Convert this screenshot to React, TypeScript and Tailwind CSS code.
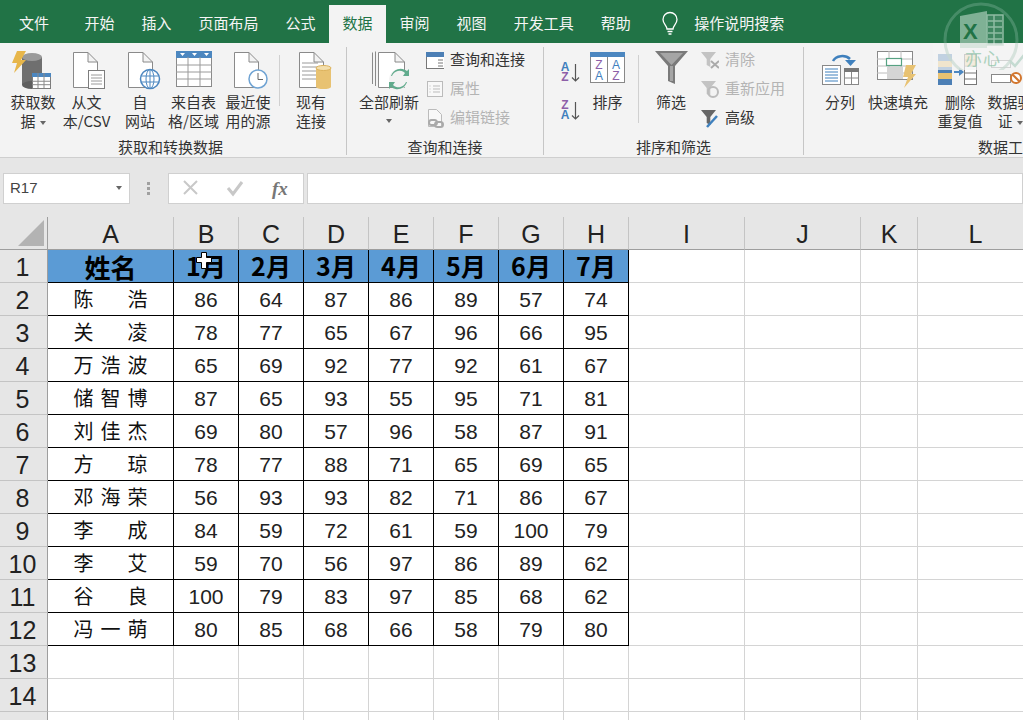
import React from "react";

const CJK = "font-['Noto_Sans_CJK_SC','Liberation_Sans',sans-serif]";
const Doc = ({ x = 0, y = 0, w = 30, h = 38, fold = 10, c = "#8a8a8a" }: any) => (
  <path d={`M${x + .5} ${y + .5}H${x + w - fold}L${x + w - .5} ${y + fold}V${y + h - .5}H${x + .5}ZM${x + w - fold} ${y + .5}V${y + fold}H${x + w - .5}`} fill="#fff" stroke={c} />
);
const MiniTable = ({ x, y, w, h }: any) => (
  <g>
    <rect x={x + .5} y={y + .5} width={w} height={h} fill="#fff" stroke="#7d7d7d" />
    <rect x={x} y={y} width={w + 1} height={4} fill="#4c87c0" />
    <path d={`M${x} ${y + h * .55}H${x + w}M${x} ${y + h * .78}H${x + w}M${x + w / 3} ${y}V${y + h}M${x + 2 * w / 3} ${y}V${y + h}`} stroke="#8a8a8a" />
  </g>
);

const IconGet = () => (
  <svg width="52" height="42" viewBox="0 0 52 42">
    <path d="M15 6h20v28H15z" fill="#6f6f6f" />
    <ellipse cx="25" cy="6" rx="10" ry="4" fill="#9a9a9a" />
    <ellipse cx="25" cy="34" rx="10" ry="4" fill="#5f5f5f" />
    <path d="M10 0h9l-5 9h5L7 22l3-10H5z" fill="#e7b64a" />
    <MiniTable x={25} y={22} w={18} h={15} />
  </svg>
);
const IconText = () => (
  <svg width="52" height="42" viewBox="0 0 52 42">
    <Doc x={12} y={1} w={25} h={36} />
    <rect x="27.500" y="19.500" width="16" height="18" fill="#fff" stroke="#7d7d7d" />
    <path d="M30 24h11M30 27h11M30 30h11M30 33h11" stroke="#9a9a9a" />
  </svg>
);
const IconWeb = () => (
  <svg width="52" height="42" viewBox="0 0 52 42">
    <Doc x={14} y={1} w={25} h={36} />
    <circle cx="36" cy="28" r="9.500" fill="#fff" stroke="#4c87c0" strokeWidth="1.500" />
    <ellipse cx="36" cy="28" rx="4" ry="9.500" fill="none" stroke="#4c87c0" />
    <path d="M27 25h18M27 31h18M36 18v20" stroke="#4c87c0" />
  </svg>
);
const IconFromTable = () => (
  <svg width="52" height="42" viewBox="0 0 52 42">
    <rect x="8.500" y="5.500" width="35" height="30" fill="#fff" stroke="#8a8a8a" />
    <rect x="8" y="0" width="36" height="7" fill="#4c87c0" />
    <path d="M8 14h36M8 21h36M8 28h36M20 6v30M32 6v30" stroke="#9a9a9a" />
    <path d="M12 2h5l-2.500 3zM24 2h5l-2.500 3zM36 2h5l-2.500 3z" fill="#fff" />
  </svg>
);
const IconRecent = () => (
  <svg width="52" height="42" viewBox="0 0 52 42">
    <Doc x={12} y={1} w={25} h={36} />
    <circle cx="36" cy="28" r="9" fill="#fff" stroke="#6fa3d3" strokeWidth="1.500" />
    <path d="M36 22v6.500h5" fill="none" stroke="#666" />
  </svg>
);
const IconExisting = () => (
  <svg width="52" height="42" viewBox="0 0 52 42">
    <Doc x={14} y={1} w={25} h={36} />
    <path d="M17 12h16M17 16h16M17 20h14M17 24h14M17 28h14" stroke="#9a9a9a" />
    <path d="M31 17h15v19H31z" fill="#e8c272" />
    <ellipse cx="38.500" cy="36" rx="7.500" ry="2" fill="#e8c272" />
    <ellipse cx="38.500" cy="17" rx="7.500" ry="2.500" fill="#f3dfae" stroke="#dcb25c" />
  </svg>
);
const IconRefresh = () => (
  <svg width="60" height="44" viewBox="0 0 60 44">
    <path d="M13.500 1.500V33M16.500 0.500V35" stroke="#8a8a8a" fill="none" />
    <Doc x={19} y={1} w={27} h={36} />
    <circle cx="40" cy="28" r="10" fill="#f3f3f3" />
    <path d="M33 25a8 8 0 0 1 13-3l-2 3h6v-7l-2 2a10 10 0 0 0-16 5zM47 31a8 8 0 0 1-13 3l2-3h-6v7l2-2a10 10 0 0 0 16-5z" fill="#61ab8d" />
  </svg>
);
const IconSort = () => (
  <svg width="52" height="42" viewBox="0 0 52 42">
    <rect x="8.500" y="1.500" width="34" height="30" fill="#fff" stroke="#888" />
    <rect x="8" y="1" width="35" height="5" fill="#4c87c0" />
    <path d="M25.500 6v26" stroke="#888" />
    <text x="17" y="18" textAnchor="middle" fontSize="12" fill="#8d5fa8" fontFamily="Liberation Sans">Z</text>
    <text x="17" y="29" textAnchor="middle" fontSize="12" fill="#3f80bd" fontFamily="Liberation Sans">A</text>
    <text x="34" y="18" textAnchor="middle" fontSize="12" fill="#3f80bd" fontFamily="Liberation Sans">A</text>
    <text x="34" y="29" textAnchor="middle" fontSize="12" fill="#8d5fa8" fontFamily="Liberation Sans">Z</text>
  </svg>
);
const AZ = ({ down }: { down?: boolean }) => (
  <svg width="24" height="22" viewBox="0 0 24 22">
    <text x="7" y="10" textAnchor="middle" fontSize="12" fontWeight="700" fill={down ? "#8d5fa8" : "#3f80bd"} fontFamily="Liberation Sans">{down ? "Z" : "A"}</text>
    <text x="7" y="20" textAnchor="middle" fontSize="12" fontWeight="700" fill={down ? "#3f80bd" : "#8d5fa8"} fontFamily="Liberation Sans">{down ? "A" : "Z"}</text>
    <path d="M17.500 3v17M14 16.500L17.500 20l3.500-3.500" fill="none" stroke="#555" strokeWidth="1.200" />
  </svg>
);
const IconFilter = () => (
  <svg width="52" height="42" viewBox="0 0 52 42">
    <path d="M10 0h33L30 15v18l-7-3V15z" fill="#7a7a7a" />
    <path d="M15 2h23L26.500 14z" fill="#a5a5a5" />
    <path d="M25 15h3v15h-3z" fill="#a5a5a5" />
  </svg>
);
const Funnel = ({ c = "#c3c3c3", size = 15 }: any) => <path d={`M0 1h${size}L${size * .62} 8v8L${size * .38} 14V8z`} fill={c} />;
const IconSplit = () => (
  <svg width="52" height="42" viewBox="0 0 52 42">
    <rect x="8.500" y="14.500" width="18" height="19" fill="#fff" stroke="#888" />
    <path d="M11 18h13M11 21h13M11 24h13M11 27h13M11 30h13" stroke="#3f80bd" />
    <rect x="30.500" y="17.500" width="14" height="16" fill="#fff" stroke="#888" />
    <rect x="30" y="17" width="15" height="4" fill="#777" />
    <path d="M37.500 21v13M30 27h15" stroke="#888" />
    <path d="M19 10a10 8 0 0 1 17-2" fill="none" stroke="#3f80bd" strokeWidth="2.500" />
    <path d="M31 9h11l-5.500 6z" fill="#3f80bd" />
  </svg>
);
const IconFlash = () => (
  <svg width="52" height="42" viewBox="0 0 52 42">
    <rect x="5.500" y="0.500" width="35" height="28" fill="#fff" stroke="#888" />
    <path d="M5 8h35M5 15h35M5 22h35M17 0v28M29 0v28" stroke="#bcbcbc" />
    <rect x="14.500" y="7.500" width="15" height="7" fill="#fff" stroke="#57a283" strokeWidth="1.200" />
    <rect x="15" y="16" width="16" height="12" fill="#d5d5d5" />
    <path d="M34 14h10l-5 9h5L32 37l4-11h-5z" fill="#e8c272" />
  </svg>
);
const IconDup = () => (
  <svg width="52" height="42" viewBox="0 0 52 42">
    <g transform="translate(-3 2)">
      <rect x="7" y="1" width="14" height="31" fill="#4c7fb5" />
      <path d="M7 8h14v6H7zM7 20h14v6H7z" fill="#e8c272" />
      <path d="M23 19h6" stroke="#4c87c0" strokeWidth="2" />
      <path d="M28 15l5 4-5 4z" fill="#4c87c0" />
      <rect x="33.500" y="1.500" width="12" height="30" fill="#fff" stroke="#777" />
      <path d="M33 7h13M33 13h13M33 20h13M33 26h13" stroke="#777" />
      <path d="M34 2h11v11H34z" fill="#e8c272" opacity=".6" />
    </g>
  </svg>
);
const IconValidate = () => (
  <svg width="52" height="42" viewBox="0 0 52 42">
    <rect x="7.500" y="9.500" width="19" height="7" fill="#fff" stroke="#888" />
    <rect x="7.500" y="23.500" width="19" height="8" fill="#fff" stroke="#888" />
    <path d="M26 10l5 5 9-11" fill="none" stroke="#57a283" strokeWidth="2.500" />
    <circle cx="32" cy="27" r="5" fill="#fff" stroke="#d2762e" strokeWidth="2" />
    <path d="M28.500 23.500l7 7" stroke="#d2762e" strokeWidth="2" />
  </svg>
);

const Caret = () => <span className="inline-block w-0 h-0 border-x-[3.5px] border-x-transparent border-t-[4px] border-t-[#666] align-middle" />;

function Big({ w, icon, l1, l2, caret }: any) {
  return (
    <div className="flex flex-col items-center shrink-0 text-[15px] leading-[19px] text-[#333]" style={{ width: w }}>
      <div className="h-[45px] pt-[4px] flex items-start justify-center">{icon}</div>
      <div className="whitespace-nowrap">{l1}</div>
      {l2 && <div className="whitespace-nowrap">{l2}{caret && <span className="ml-1"><Caret /></span>}</div>}
    </div>
  );
}
function Small({ icon, label, off }: any) {
  return (
    <div className={`h-[29px] flex items-center gap-[6px] text-[15px] whitespace-nowrap ${off ? "text-[#b4b4b4]" : "text-[#333]"}`}>
      <span className="w-[18px] h-[20px] flex items-center justify-center">{icon}</span>
      {label}
    </div>
  );
}

function Group({ w, label, children, labelClass = "text-center" }: any) {
  return (
    <div className="shrink-0 h-full border-r border-[#c6c6c6] flex flex-col" style={{ width: w }}>
      <div className="h-[90px] shrink-0 flex items-start">{children}</div>
      <div className={`text-[15px] leading-[20px] text-[#333] whitespace-nowrap ${labelClass}`}>{label}</div>
    </div>
  );
}

const tabs = ["开始", "插入", "页面布局", "公式", "数据", "审阅", "视图", "开发工具", "帮助"];

function Ribbon() {
  return (
    <>
      <div className="h-[43px] bg-[#217346] flex items-end text-[15px] text-[#f5f5f5] shrink-0">
        <div className="h-[38px] leading-[36px] ml-[6px] mr-[9px] px-[13px]">文件</div>
        {tabs.map((t) => (
          <div key={t} className={`h-[38px] leading-[36px] px-[13.500px] ${t === "数据" ? "bg-[#f3f3f3] text-[#217346]" : ""}`}>{t}</div>
        ))}
        <div className="h-[38px] flex items-center ml-[17px] gap-[15px]">
          <svg width="18" height="24" viewBox="0 0 18 24" className="mb-[2px]">
            <path d="M6 18c0-3-4-5-4-9.500a7 7 0 0 1 14 0C16 13 12 15 12 18zM6.500 20.500h5M7.500 23h3" fill="none" stroke="#fff" strokeWidth="1.300" />
          </svg>
          <span className="mb-[2px]">操作说明搜索</span>
        </div>
      </div>
      <div className="h-[114px] bg-[#f3f3f3] flex pt-[4px] pb-[2px] overflow-hidden shrink-0">
        <Group w={347} label="获取和转换数据" labelClass="text-center pr-[5px]">
          <div className="w-[5px] shrink-0" />
          <Big w={56} icon={<IconGet />} l1="获取数" l2="据" caret />
          <Big w={51} icon={<IconText />} l1="从文" l2="本/CSV" />
          <Big w={56} icon={<IconWeb />} l1="自" l2="网站" />
          <Big w={51} icon={<IconFromTable />} l1="来自表" l2="格/区域" />
          <Big w={58} icon={<IconRecent />} l1="最近使" l2="用的源" />
          <div className="w-[2px] shrink-0" />
          <div className="w-px h-[51px] bg-[#d0d0d0] shrink-0 mt-[8px]" />
          <div className="w-[3px] shrink-0" />
          <Big w={56} icon={<IconExisting />} l1="现有" l2="连接" />
        </Group>
        <Group w={197} label="查询和连接">
          <div className="w-[11px] shrink-0" />
          <div className="flex flex-col items-center w-[62px] shrink-0 text-[15px] leading-[19px] text-[#333]">
            <div className="h-[45px] pt-[4px]"><IconRefresh /></div>
            <div className="whitespace-nowrap">全部刷新</div>
            <div className="h-[19px] flex items-center"><Caret /></div>
          </div>
          <div className="w-[6px] shrink-0" />
          <div className="flex flex-col -mt-[2px]">
            <Small label="查询和连接" icon={<svg width="20" height="20"><rect x=".5" y="2.500" width="18" height="16" fill="#fff" stroke="#777" /><rect width="19" height="5" y="2" fill="#4c7fb5" /><path d="M12 10h5M12 13h5M12 16h5" stroke="#777" /></svg>} />
            <Small off label="属性" icon={<svg width="18" height="18"><rect x="1.500" y="1.500" width="15" height="15" fill="#f8f8f8" stroke="#bbb" /><path d="M7 6h7M7 9h7M7 12h7M3.500 6h1M3.500 9h1M3.500 12h1" stroke="#bbb" /></svg>} />
            <Small off label="编辑链接" icon={<svg width="18" height="20"><path d="M2.500 1.500h8l5 5v12h-13z" fill="#f8f8f8" stroke="#bbb" /><rect x="3" y="12" width="8" height="5" rx="2.500" fill="none" stroke="#aaa" strokeWidth="2" /><rect x="9" y="14" width="8" height="5" rx="2.500" fill="none" stroke="#aaa" strokeWidth="2" /></svg>} />
          </div>
        </Group>
        <Group w={260} label="排序和筛选">
          <div className="w-[14px] shrink-0" />
          <div className="flex flex-col w-[24px] shrink-0 pt-[14px] gap-[16px]"><AZ /><AZ down /></div>
          <Big w={51} icon={<IconSort />} l1="排序" />
          <div className="w-[5px] shrink-0" />
          <div className="w-px h-[68px] bg-[#d0d0d0] shrink-0 mt-[8px]" />
          <div className="w-[6px] shrink-0" />
          <Big w={52} icon={<IconFilter />} l1="筛选" />
          <div className="w-[4px] shrink-0" />
          <div className="flex flex-col -mt-[2px]">
            <Small off label="清除" icon={<svg width="20" height="20"><g transform="translate(0 1)"><Funnel /></g><path d="M10 11l8 7M18 11l-8 7" stroke="#aaa" strokeWidth="2" /></svg>} />
            <Small off label="重新应用" icon={<svg width="20" height="20"><g transform="translate(0 1)"><Funnel /></g><circle cx="12" cy="13" r="5" fill="none" stroke="#bbb" strokeWidth="2" /></svg>} />
            <Small label="高级" icon={<svg width="20" height="20"><g transform="translate(0 1)"><Funnel c="#666" /></g><path d="M6 19l10-11" stroke="#3f80bd" strokeWidth="2.500" /></svg>} />
          </div>
        </Group>
        <Group w={260} label="数据工具" labelClass="text-left pl-[174px]">
          <div className="w-[10px] shrink-0" />
          <Big w={52} icon={<IconSplit />} l1="分列" />
          <div className="w-[2px] shrink-0" />
          <Big w={60} icon={<IconFlash />} l1="快速填充" />
          <Big w={64} icon={<IconDup />} l1="删除" l2="重复值" />
          <Big w={36} icon={<IconValidate />} l1="数据验" l2="证" caret />
        </Group>
      </div>
      <div className="h-[1px] bg-[#cfcfcf] shrink-0" />
    </>
  );
}

function FormulaBar() {
  return (
    <div className="h-[59px] bg-[#e6e6e6] shrink-0 flex items-center pl-[3px] pt-[1px] gap-0">
      <div className="w-[127px] h-[31px] bg-white border border-[#d0d0d0] flex items-center justify-between pl-[6px] pr-[7px] text-[15px] text-[#444] font-['Liberation_Sans',sans-serif]">
        R17<Caret />
      </div>
      <div className="w-[38px] flex flex-col items-center gap-[2px] shrink-0 pr-[2px]">
        <i className="w-[3px] h-[3px] bg-[#a0a0a0]" /><i className="w-[3px] h-[3px] bg-[#a0a0a0]" /><i className="w-[3px] h-[3px] bg-[#a0a0a0]" />
      </div>
      <div className="w-[136px] h-[31px] bg-white border border-[#d0d0d0] flex items-center shrink-0">
        <svg width="134" height="29" viewBox="0 0 134 29">
          <path d="M15 7l13 13M28 7L15 20" stroke="#c8c8c8" strokeWidth="2" />
          <path d="M59 14l5 6 9-12" fill="none" stroke="#c8c8c8" strokeWidth="3" />
          <text x="103" y="21" fontFamily="Liberation Serif" fontStyle="italic" fontWeight="700" fontSize="19" fill="#777">fx</text>
        </svg>
      </div>
      <div className="ml-[3px] flex-1 h-[31px] bg-white border border-[#d0d0d0]" />
    </div>
  );
}

const rows: [string, number[]][] = [
  ["陈||浩", [86, 64, 87, 86, 89, 57, 74]],
  ["关||凌", [78, 77, 65, 67, 96, 66, 95]],
  ["万|浩|波", [65, 69, 92, 77, 92, 61, 67]],
  ["储|智|博", [87, 65, 93, 55, 95, 71, 81]],
  ["刘|佳|杰", [69, 80, 57, 96, 58, 87, 91]],
  ["方||琼", [78, 77, 88, 71, 65, 69, 65]],
  ["邓|海|荣", [56, 93, 93, 82, 71, 86, 67]],
  ["李||成", [84, 59, 72, 61, 59, 100, 79]],
  ["李||艾", [59, 70, 56, 97, 86, 89, 62]],
  ["谷||良", [100, 79, 83, 97, 85, 68, 62]],
  ["冯|一|萌", [80, 85, 68, 66, 58, 79, 80]],
];
const cols = ["A", "B", "C", "D", "E", "F", "G", "H", "I", "J", "K", "L"];
const rowHead = "bg-[#e6e6e6] border-r border-b border-r-[#9e9e9e] border-b-[#c4c4c4] flex items-center justify-center pt-[4px] pr-[2px] text-[25px] text-[#222] font-['Liberation_Sans',sans-serif]";
const colHead = "bg-[#e6e6e6] border-r border-b border-r-[#c4c4c4] border-b-[#9e9e9e] flex items-center justify-center pt-[4px] text-[25px] text-[#222] font-['Liberation_Sans',sans-serif]";
const blank = "border-r border-b border-[#d4d4d4]";
const inTable = "border-r border-b border-black flex items-center justify-center";

function Sheet() {
  return (
    <div className="relative grid grid-cols-[48px_126px_65px_65px_65px_65px_65px_65px_65px_116px_116px_57px_116px] auto-rows-[33px] overflow-hidden w-[1023px]">
      <div className="bg-[#e6e6e6] border-r border-b border-r-[#9e9e9e] border-b-[#9e9e9e] flex items-end justify-end pr-[2px] pb-[2px]">
        <svg width="28" height="27"><path d="M27 0v26H1z" fill="#b3b3b3" /></svg>
      </div>
      {cols.map((c) => <div key={c} className={colHead}>{c}</div>)}

      <div className={rowHead}>1</div>
      <div className={`${inTable} bg-[#5b9bd5] text-[26px] font-bold text-black ${CJK}`}>姓名</div>
      {[1, 2, 3, 4, 5, 6, 7].map((m) => (
        <div key={m} className={`${inTable} bg-[#5b9bd5] text-[25px] font-bold text-black ${CJK}`}>{m}月</div>
      ))}
      {[0, 1, 2, 3].map((i) => <div key={i} className={blank} />)}

      {rows.map(([name, vals], r) => (
        <React.Fragment key={r}>
          <div className={rowHead}>{r + 2}</div>
          <div className={inTable}>
            <div className={`w-[74px] flex justify-between text-[20px] text-[#111] ${CJK}`}>
              {name.split("|").map((ch, i) => <span key={i} className="w-[20px] text-center">{ch}</span>)}
            </div>
          </div>
          {vals.map((v, i) => <div key={i} className={`${inTable} pt-[2px] text-[21px] text-[#222] font-['Liberation_Sans',sans-serif]`}>{v}</div>)}
          {[0, 1, 2, 3].map((i) => <div key={i} className={blank} />)}
        </React.Fragment>
      ))}

      {[13, 14].map((n) => (
        <React.Fragment key={n}>
          <div className={rowHead}>{n}</div>
          {cols.map((c) => <div key={c} className={blank} />)}
        </React.Fragment>
      ))}
      <div className={rowHead} />
      {cols.map((c) => <div key={c} className={blank} />)}

      <svg className="absolute left-[195px] top-[34px]" width="18" height="20" viewBox="0 0 18 20">
        <path d="M6.500 1.500h5v5h5v5h-5v6h-5v-6h-5v-5h5z" fill="#fff" stroke="#000" />
      </svg>
    </div>
  );
}

function Watermark() {
  return (
    <div className="absolute right-0 top-0 w-[90px] h-[70px] pointer-events-none overflow-hidden">
      <svg width="90" height="70" viewBox="0 0 90 70">
        <circle cx="48" cy="40" r="36" fill="none" stroke="#5b9a7a" strokeWidth="3" opacity=".65" />
        <path d="M27 16l27-5v37H27z" fill="#8fbca3" opacity=".85" />
        <path d="M54 15h16v30H54z" fill="#3f8661" stroke="#8fbca3" strokeWidth="1.500" />
        <path d="M55 21h14M55 27h14M55 33h14M55 39h14M61 15v30" stroke="#8fbca3" strokeWidth="1.500" />
        <text x="30" y="39" fontFamily="Liberation Sans" fontWeight="700" fontSize="22" fill="#217346">X</text>
        <rect x="0" y="43" width="90" height="27" fill="#f3f3f3" opacity=".7" />
      </svg>
      <div className={`absolute left-[32px] top-[49px] text-[17px] leading-[18px] tracking-[1px] text-[#8cc3a6] opacity-70 ${CJK}`}>亦心</div>
    </div>
  );
}

export default function App() {
  return (
    <div className={`relative w-[1023px] h-[720px] overflow-hidden bg-white flex flex-col ${CJK}`}>
      <Ribbon />
      <FormulaBar />
      <Sheet />
      <Watermark />
    </div>
  );
}
